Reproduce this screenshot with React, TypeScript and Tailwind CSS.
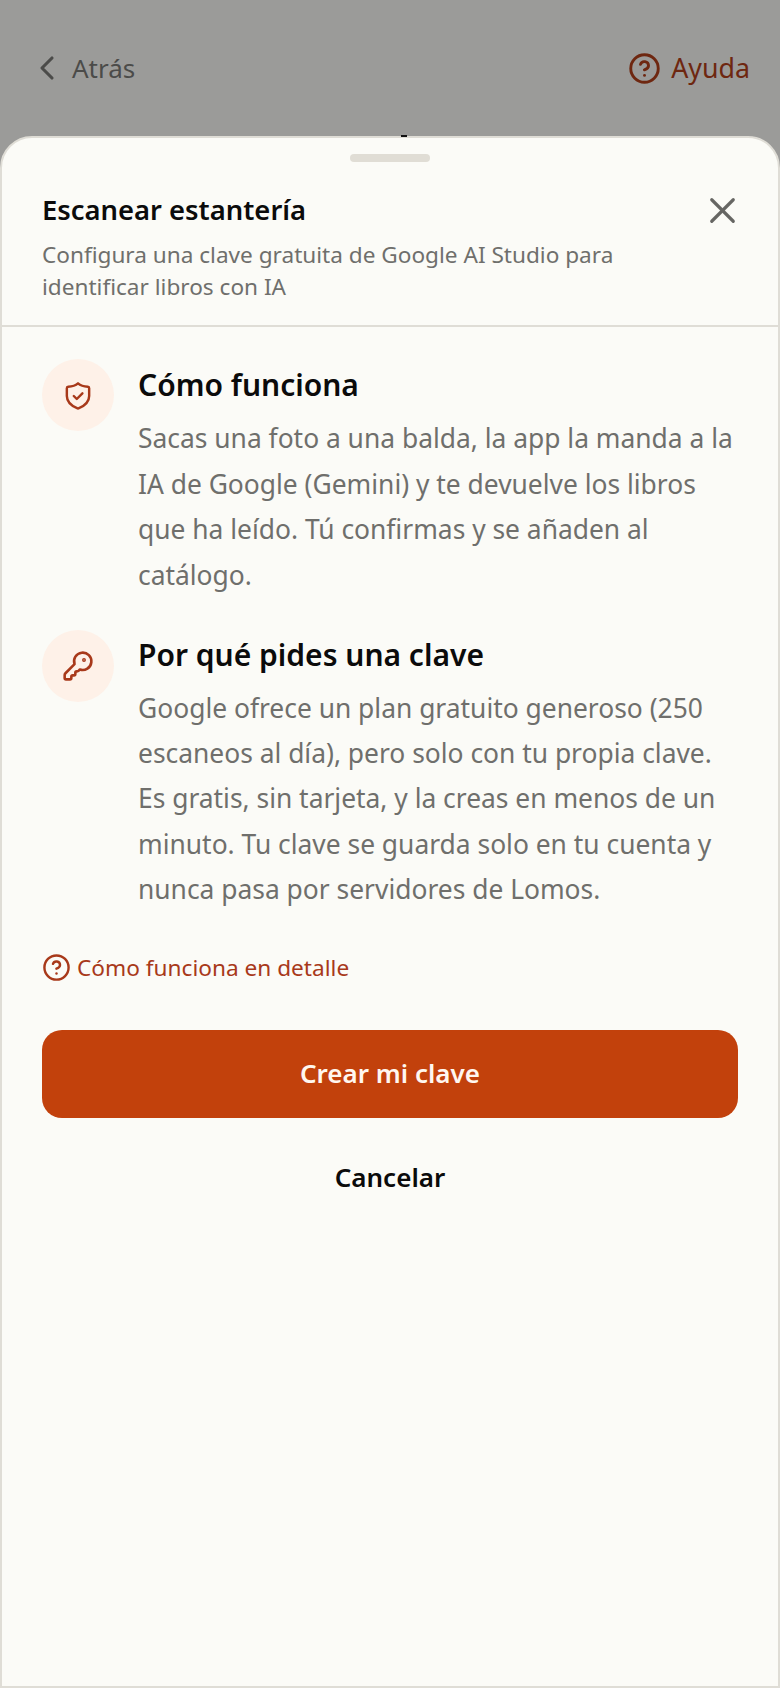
import { ChevronLeft, CircleHelp, KeyRound, X } from "lucide-react";

function Shield() {
  return (
    <svg width="30" height="30" viewBox="0 0 32 32" fill="none" stroke="#a8391a" strokeWidth="2.6" strokeLinecap="round" strokeLinejoin="round" className="mt-[1px]">
      <path d="M16 2.500c-2.500 2.200-6.400 3.400-10.500 3.600a1.500 1.500 0 0 0-1.400 1.500V16c0 6.400 4.700 10.500 11.400 13.300a1.500 1.500 0 0 0 1 0C23.200 26.500 27.900 22.400 27.900 16V7.600a1.500 1.500 0 0 0-1.400-1.500C22.400 5.900 18.500 4.700 16 2.500z" />
      <path d="M11.500 16l3.200 3.200 6-6" />
    </svg>
  );
}

export default function App() {
  return (
    <div className="h-[1688px] w-[780px] bg-[#9b9b99] flex flex-col overflow-hidden font-['Noto_Sans',sans-serif]">
      <div className="h-[136px] shrink-0 flex items-center justify-between pl-[27px] pr-[30px]">
        <div className="flex items-center gap-[5px] text-[26px] text-[#4b4b49]">
          <ChevronLeft size={40} strokeWidth={1.9} />
          <span>Atrás</span>
        </div>
        <div className="flex items-center gap-[10px] text-[26.8px] text-[#6e2710]">
          <CircleHelp size={33} strokeWidth={2.1} />
          <span>Ayuda</span>
        </div>
      </div>
      <div className="relative flex-1 bg-[#fbfbf7] border-2 border-[#dfddd6] rounded-t-[32px] flex flex-col">
        <div className="absolute -top-[3px] left-[399px] w-[6px] h-[2px] bg-[#111]" />
        <div className="flex justify-center pt-[16px]">
          <div className="w-[80px] h-[8px] rounded-full bg-[#e0ddd5]" />
        </div>
        <div className="flex justify-between items-start pl-[40px] pr-[34px] pt-[28px] pb-[22px] border-b-2 border-[#dfddd6]">
          <div>
            <h1 className="text-[27.4px] leading-[40px] font-semibold text-[#0b0b0b]">Escanear estantería</h1>
            <p className="mt-[9px] text-[22.6px] leading-[32px] text-[#6f6f6c] w-[620px]">Configura una clave gratuita de Google AI Studio para identificar libros con IA</p>
          </div>
          <X size={43} strokeWidth={1.8} className="text-[#666663] -mt-[1px]" />
        </div>
        <div className="flex flex-col px-[40px] pt-[32px]">
          <div className="flex gap-[24px]">
            <div className="w-[72px] h-[72px] shrink-0 rounded-full bg-[#fef1e8] flex items-center justify-center"><Shield /></div>
            <div className="pt-[3px]">
              <h2 className="text-[30px] leading-[46px] font-semibold text-[#0b0b0b] mb-[8px]">Cómo funciona</h2>
              <p className="text-[26.4px] leading-[45.5px] text-[#6f6f6c]">Sacas una foto a una balda, la app la manda a la IA de Google (Gemini) y te devuelve los libros que ha leído. Tú confirmas y se añaden al catálogo.</p>
            </div>
          </div>
          <div className="flex gap-[24px] mt-[32px]">
            <div className="w-[72px] h-[72px] shrink-0 rounded-full bg-[#fef1e8] flex items-center justify-center"><KeyRound size={32} strokeWidth={1.95} className="text-[#a8391a]" /></div>
            <div className="pt-[2px]">
              <h2 className="text-[30px] leading-[46px] font-semibold text-[#0b0b0b] mb-[8px]">Por qué pides una clave</h2>
              <p className="text-[26.4px] leading-[45.2px] text-[#6f6f6c]">Google ofrece un plan gratuito generoso (250 escaneos al día), pero solo con tu propia clave. Es gratis, sin tarjeta, y la creas en menos de un minuto. Tu clave se guarda solo en tu cuenta y nunca pasa por servidores de Lomos.</p>
            </div>
          </div>
          <div className="flex items-center gap-[6px] mt-[37.5px] text-[22.65px] leading-[36px] text-[#a8391a]">
            <CircleHelp size={29} strokeWidth={2} />
            <span>Cómo funciona en detalle</span>
          </div>
          <div className="mt-[44px] h-[88px] rounded-[20px] bg-[#c2410c] flex items-center justify-center text-[26px] font-semibold text-[#fff7f0]">Crear mi clave</div>
          <div className="mt-[16px] h-[88px] flex items-center justify-center text-[26px] font-semibold text-[#0b0b0b]">Cancelar</div>
        </div>
      </div>
    </div>
  );
}
